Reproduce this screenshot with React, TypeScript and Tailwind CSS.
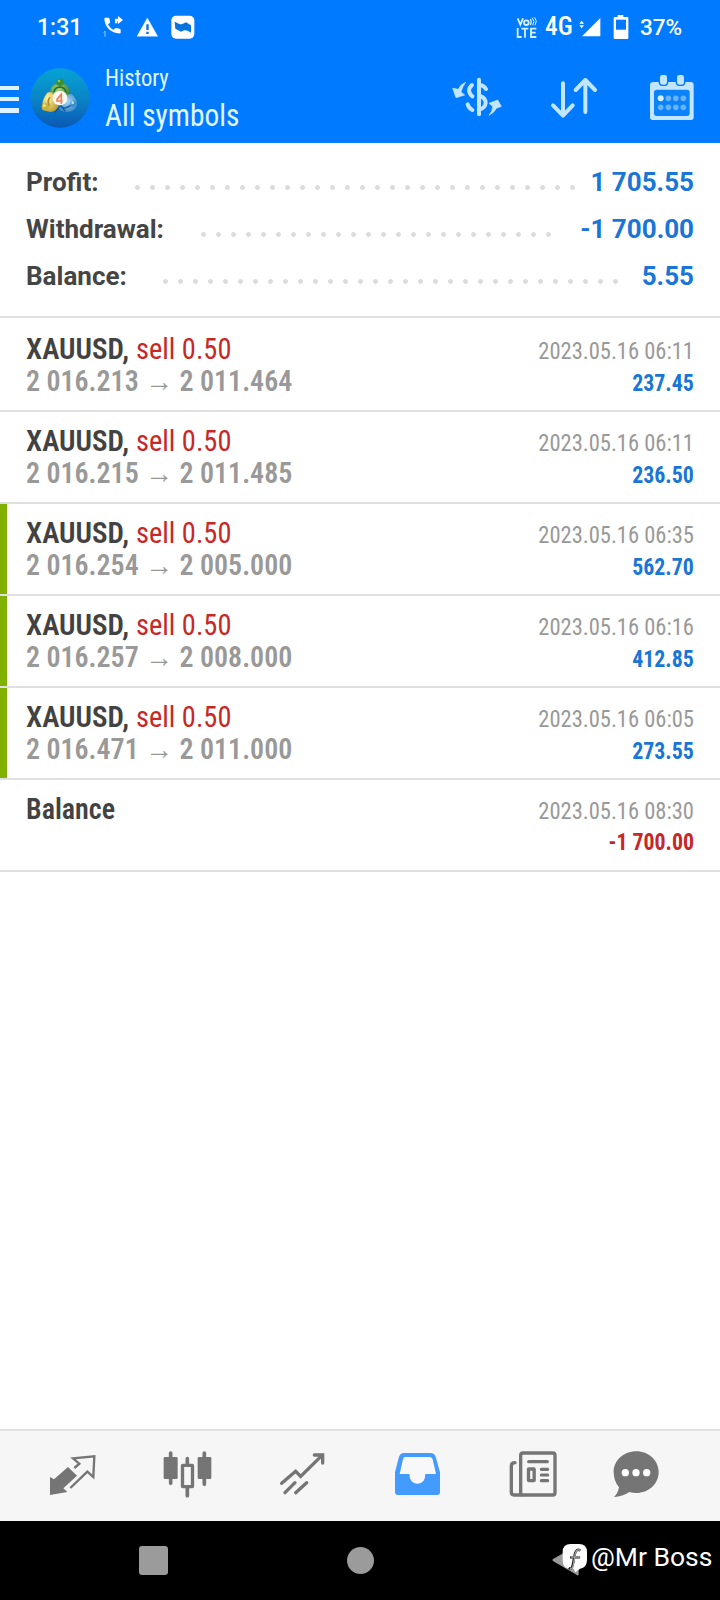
type Deal = { from: string; to: string; time: string; profit: string; marked?: boolean };

const summary = [
  { label: "Profit:", value: "1 705.55", dots: "left-[135px] w-[440px]" },
  { label: "Withdrawal:", value: "-1 700.00", dots: "left-[201px] w-[350px]" },
  { label: "Balance:", value: "5.55", dots: "left-[163px] w-[455px]" },
];

const deals: Deal[] = [
  { from: "2 016.213", to: "2 011.464", time: "2023.05.16 06:11", profit: "237.45" },
  { from: "2 016.215", to: "2 011.485", time: "2023.05.16 06:11", profit: "236.50" },
  { from: "2 016.254", to: "2 005.000", time: "2023.05.16 06:35", profit: "562.70", marked: true },
  { from: "2 016.257", to: "2 008.000", time: "2023.05.16 06:16", profit: "412.85", marked: true },
  { from: "2 016.471", to: "2 011.000", time: "2023.05.16 06:05", profit: "273.55", marked: true },
];

function StatusBar() {
  return (
    <div className="flex h-[54px] items-center pl-[37px] font-['Roboto'] text-white">
      <span className="w-[66px] text-[23px] leading-none font-medium">1:31</span>
      <svg className="h-6 w-6" viewBox="0 0 72 72" fill="#fff">
        <path d="M4 10 q0-2 3-2 h9 q3 0 3.500 3 l1.500 9 q0 3-2 4.500 l-4 4 q6 11 16 16 l5-4 q2-2 4-1.500 l10 2 q3 1 3 3.500 v8 q0 3-3 3 C24 55 4 35 4 10z" />
        <path d="M36 20 V11 H45 V3 L60 15 L45 27 V19 H43 V25 H36z" />
        <path d="M2 52 L6 49 V65" fill="none" stroke="#8fd0ff" strokeWidth="3" />
      </svg>
      <svg className="ml-[9px] h-6 w-[23px]" viewBox="0 0 69 72" fill="#fff">
        <path d="M34 9 L65 64 H3z" stroke="#fff" strokeWidth="1" />
        <path d="M31 28 h7 v17 h-7z M31 50 h7 v7 h-7z" fill="#0a6fd8" />
      </svg>
      <svg className="ml-3 h-6 w-6" viewBox="0 0 72 72">
        <rect x="1" y="2" width="69" height="69" rx="14" fill="#fff" />
        <path d="M11 20 L25 27 Q29 29 34 27 L45 22 L60 31 V53 L50 47 L40 46 L30 50 L13 41z" fill="#0a72dd" />
      </svg>
      <svg className="ml-[321px] h-6 w-[22px]" viewBox="0 0 66 72" fill="none" stroke="#d7f0ff" strokeWidth="5.500">
        <path d="M5 10 L13 29 L21 10" />
        <ellipse cx="31" cy="23" rx="7" ry="7" />
        <path d="M43 30 Q48 20 43 12" strokeWidth="4" />
        <path d="M50 31 Q58 20 49 8 M57 31 Q65 18 56 7" strokeWidth="3" />
        <path d="M5 39 V66 H17 M16 41 H37 M27 41 V68 M61 41 H45 V66 H61 M45 53 H59" />
      </svg>
      <span className="ml-[7px] w-[34px] font-['Roboto_Condensed'] text-[25.5px] leading-none font-medium">4G</span>
      <svg className="h-6 w-[22px]" viewBox="0 0 66 72" fill="#fff">
        <path d="M64 9 V64 H9z M1 26 L8 17 L15 26z M1 31 L8 40 L15 31z" />
      </svg>
      <svg className="ml-3 h-[26px] w-4" viewBox="0 0 48 78">
        <path d="M14 3 H31 V9 H43 Q46 9 46 12 V72 Q46 75 43 75 H5 Q2 75 2 72 V12 Q2 9 5 9 H14z" fill="#fff" />
        <path d="M9 17 H39 V47 H9z" fill="#0078ff" />
      </svg>
      <span className="ml-[11px] text-[22.5px] leading-none font-medium">37%</span>
    </div>
  );
}

function Logo() {
  return (
    <svg className="ml-[11px] h-[60px] w-[60px]" viewBox="0 0 180 180">
      <defs>
        <linearGradient id="sea" x1="0" y1="0" x2="0" y2="1">
          <stop offset="0" stopColor="#06a3d3" />
          <stop offset="0.5" stopColor="#0a85c6" />
          <stop offset="1" stopColor="#0b58b4" />
        </linearGradient>
        <radialGradient id="green" cx="0.4" cy="0.4" r="0.7">
          <stop offset="0" stopColor="#a9d97c" />
          <stop offset="1" stopColor="#2c7a2c" />
        </radialGradient>
        <radialGradient id="gold" cx="0.35" cy="0.3" r="0.9">
          <stop offset="0" stopColor="#fff0a0" />
          <stop offset="1" stopColor="#b08d1e" />
        </radialGradient>
        <radialGradient id="blue" cx="0.5" cy="0.4" r="0.8">
          <stop offset="0" stopColor="#a8dcf6" />
          <stop offset="1" stopColor="#1d6cb4" />
        </radialGradient>
      </defs>
      <circle cx="90" cy="90" r="89" fill="url(#sea)" />
      <path d="M61 78 Q58 48 90 44 Q122 48 120 78 L106 90 L74 88z" fill="url(#green)" />
      <path d="M72 72 Q74 58 90 57 Q106 58 108 74" fill="none" stroke="#276e35" strokeWidth="5" />
      <circle cx="90" cy="43" r="11" fill="#3c8f35" />
      <circle cx="87" cy="39" r="4" fill="#86c860" />
      <path d="M52 74 Q38 92 37 108 Q38 130 62 132 Q82 130 86 112 L74 80 Q62 68 52 74z" fill="url(#gold)" />
      <path d="M60 88 Q50 100 58 114" fill="none" stroke="#a98822" strokeWidth="5" />
      <circle cx="46" cy="117" r="11" fill="#c9b23a" />
      <circle cx="43" cy="113" r="4" fill="#f6e88a" />
      <path d="M128 80 Q142 96 141 110 Q136 130 112 132 Q90 132 82 114 L106 84 Q120 74 128 80z" fill="url(#blue)" />
      <path d="M94 118 Q108 124 122 112" fill="none" stroke="#1a62a6" strokeWidth="5" />
      <circle cx="131" cy="108" r="10" fill="#3b91d0" />
      <circle cx="128" cy="104" r="4" fill="#b9e4fb" />
      <path d="M74 134 L92 112 L106 130" fill="none" stroke="#0a5aa0" strokeWidth="4" />
      <circle cx="90" cy="90" r="22" fill="#fdf9f4" />
      <path d="M98 99 H81 V94 L94 79 V108" fill="none" stroke="#ee8055" strokeWidth="5" />
    </svg>
  );
}

function Header() {
  return (
    <header className="h-[143px] bg-[#007bff]">
      <StatusBar />
      <div className="flex h-[89px] items-start">
        <div className="mt-[32px] flex w-[19px] flex-col gap-[7px]">
          <div className="h-1 bg-[#dcf2ff]" />
          <div className="h-1 bg-[#dcf2ff]" />
          <div className="h-[5px] bg-[#dcf2ff]" />
        </div>
        <div className="mt-[14px]">
          <Logo />
        </div>
        <div className="ml-[15px] w-[345px] pt-2 font-['Roboto_Condensed'] text-[#e2f6ff]">
          <div className="origin-left scale-x-[.94] text-[24px] leading-[32px]">History</div>
          <div className="origin-left scale-x-[.918] text-[32px] leading-[42px]">All symbols</div>
        </div>
        <svg className="mt-[20px] h-[46px] w-[54px]" viewBox="60 222 162 138" fill="none" stroke="#c2e6ff">
          <path d="M147 239 V343" strokeWidth="12" strokeLinecap="round" />
          <path d="M150 256 Q160 255 168 267 M126 255 Q108 272 127 289 M150 288 Q167 294 167 309 Q165 324 150 328 M113 313 Q116 325 127 330" strokeWidth="12" strokeLinecap="round" />
          <path d="M107 247 Q91 253 85 268 L68 265 L78 293 L104 285 L93 276 Q96 262 107 247z M177 346 Q193 338 199 325 L214 319 L203 300 L177 310 L188 319 Q188 334 177 346z" fill="#c2e6ff" strokeWidth="2" />
        </svg>
        <svg className="mt-[20px] ml-[45px] h-[46px] w-[50px]" viewBox="357 222 150 138" fill="none" stroke="#c2e6ff" strokeWidth="12" strokeLinecap="round" strokeLinejoin="round">
          <path d="M399 250 V346 M369 316 L399 347 L428 316 M466 336 V240 M437 270 L466 240 L495 270" />
        </svg>
        <svg className="mt-[19px] ml-[49px] h-[50px] w-[48px]" viewBox="651 216 144 150">
          <path d="M667 243 H780 Q788 243 788 252 V349 Q788 357 780 357 H665 Q657 357 657 349 V252 Q657 243 667 243z" fill="#c2e6ff" />
          <rect x="669" y="266" width="107" height="79" rx="8" fill="#0b82f8" />
          <g fill="#c2e6ff" stroke="#007bff" strokeWidth="4">
            <rect x="685" y="220" width="25" height="33" rx="9" />
            <rect x="736" y="220" width="25" height="33" rx="9" />
          </g>
          <g fill="#66b2fb">
            <circle cx="689" cy="292" r="9" fill="#d2eeff" />
            <circle cx="712" cy="292" r="8.500" />
            <circle cx="734.500" cy="292" r="8.500" />
            <circle cx="757" cy="292" r="8.500" />
            <circle cx="689" cy="319" r="8.500" />
            <circle cx="712" cy="319" r="8.500" />
            <circle cx="734.500" cy="319" r="8.500" />
            <circle cx="757" cy="319" r="8.500" />
          </g>
        </svg>
      </div>
    </header>
  );
}

function Summary() {
  return (
    <section className="h-[175px] border-b-2 border-[#e0e0e0] pt-[16px] font-['Roboto'] text-[26px] leading-[47px] font-bold">
      {summary.map((s) => (
        <div key={s.label} className="relative flex h-[47px] justify-between pr-[26px] pl-[26px]">
          <span className="text-[#454545]">{s.label}</span>
          <div
            className={`absolute top-[26px] h-[5px] bg-[radial-gradient(circle_at_2.500px_2.500px,#dcdcdc_2px,transparent_2.800px)] bg-[length:15px_5px] ${s.dots}`}
          />
          <span className="text-[#1976d6]">{s.value}</span>
        </div>
      ))}
    </section>
  );
}

function DealRow({ deal, first }: { deal: Deal; first: boolean }) {
  return (
    <div className={`flex border-b-2 border-[#e0e0e0] ${first ? "h-[94px]" : "h-[92px]"}`}>
      <div className={`w-[7px] ${deal.marked ? "bg-[#80b000]" : ""}`} />
      <div className={`flex flex-1 flex-col pr-[26px] pl-[19px] ${first ? "pt-[15px]" : "pt-[13px]"}`}>
        <div className="flex h-8 items-baseline justify-between leading-[32px]">
          <span className="text-[29px] font-semibold text-[#424242]">
            XAUUSD, <span className="inline-block origin-left scale-x-[.98] font-normal text-[#c62828]">sell 0.50</span>
          </span>
          <span className="origin-right scale-x-[.938] text-[24px] text-[#999]">{deal.time}</span>
        </div>
        <div className="flex h-8 items-baseline justify-between leading-[32px]">
          <span className="origin-left scale-x-[.963] text-[29px] font-semibold text-[#999]">
            {deal.from} → {deal.to}
          </span>
          <span className="origin-right scale-x-[.95] text-[23px] font-bold text-[#1976d6]">{deal.profit}</span>
        </div>
      </div>
    </div>
  );
}

function History() {
  return (
    <section className="flex-1 font-['Roboto_Condensed']">
      {deals.map((d, i) => (
        <DealRow key={d.from} deal={d} first={i === 0} />
      ))}
      <div className="h-[92px] border-b-2 border-[#e0e0e0] px-[26px] pt-[13px] leading-[32px]">
        <div className="flex h-8 items-baseline justify-between">
          <span className="origin-left scale-x-[.967] text-[29px] font-semibold text-[#424242]">Balance</span>
          <span className="origin-right scale-x-[.938] text-[24px] text-[#999]">2023.05.16 08:30</span>
        </div>
        <div className="flex h-8 items-baseline justify-end pt-[2px]">
          <span className="origin-right scale-x-[.95] text-[23px] font-bold text-[#c62828]">-1 700.00</span>
        </div>
      </div>
    </section>
  );
}

function TabBar() {
  return (
    <nav className="flex h-[92px] border-t-2 border-[#e0e0e0] bg-[#f6f6f6] pt-[17px] pl-[46px] text-[#757575]">
      <svg className="h-[52px] w-[52px]" viewBox="138 84 156 156">
        <path d="M150 171 L162 178 L204 141 L231 167 L190 205 L202 216 L150 225z" fill="currentColor" />
        <path d="M223 144 L238 131 L219 115 L283 109 L280 171 L262 155 L211 204" fill="none" stroke="currentColor" strokeWidth="7" />
      </svg>
      <svg className="ml-[63px] h-[52px] w-[52px]" viewBox="483 84 156 156">
        <path d="M512 99 V190 M613 99 V193 M562 116 V134 M562 202 V227" stroke="currentColor" strokeWidth="11" strokeLinecap="round" />
        <rect x="491" y="111" width="42" height="66" rx="4" fill="currentColor" />
        <rect x="593" y="111" width="41" height="66" rx="4" fill="currentColor" />
        <rect x="547.500" y="136" width="30" height="64" rx="1" fill="none" stroke="currentColor" strokeWidth="10" />
      </svg>
      <svg className="ml-[63px] h-[52px] w-[52px]" viewBox="828 84 156 156" fill="none" stroke="currentColor" strokeWidth="10" strokeLinecap="round">
        <path d="M845 190 L887 154 L902 169 L966 106 M943 105 H968 V129 M855 218 L885 188 M887 218 L920 188" />
      </svg>
      <svg className="ml-[63px] h-[52px] w-[52px]" viewBox="93 84 156 156">
        <path d="M132 99 H212 Q223 99 227 110 L240 157 V216 Q240 225 231 225 H114 Q105 225 105 216 V157 L117 110 Q121 99 132 99z" fill="#449bff" />
        <path d="M136 111 H209 Q216 111 218 118 L228 162 H196 Q196 191 172 191 Q149 191 148 162 H119 L129 118 Q130 111 136 111z" fill="#f8f8f8" />
      </svg>
      <svg className="ml-[64px] h-[52px] w-[52px]" viewBox="441 84 156 156" fill="none" stroke="currentColor" strokeWidth="10">
        <rect x="482" y="99" width="103" height="126" rx="7" />
        <path d="M465 128 Q454 128 454 138 V217 Q454 225 462 225 H484" strokeLinecap="round" />
        <path d="M506 125 H562 M544 148 H563 M544 165 H563 M544 182 H563" strokeWidth="9.500" strokeLinecap="round" />
        <rect x="505.500" y="147" width="17" height="35" rx="1" />
      </svg>
      <svg className="ml-[50px] h-[52px] w-[52px]" viewBox="747 84 156 156">
        <path d="M829 94 C866 94 896 121 896 156 C896 192 866 219 829 219 Q818 219 808 216 Q788 229 762 231 Q774 220 777 202 Q761 183 761 156 C761 121 791 94 829 94z" fill="currentColor" />
        <circle cx="796" cy="158" r="11" fill="#fff" />
        <circle cx="828" cy="158" r="11" fill="#fff" />
        <circle cx="860" cy="158" r="11" fill="#fff" />
      </svg>
    </nav>
  );
}

function SystemNav() {
  return (
    <div className="flex h-[79px] items-start bg-black">
      <div className="mt-[25px] ml-[139px] h-[29px] w-[29px] rounded-[3px] bg-[#9b9b9b]" />
      <div className="mt-[26px] ml-[179px] h-[27px] w-[27px] rounded-full bg-[#9b9b9b]" />
      <svg className="mt-[21px] ml-[176px] h-9 w-[38px]" viewBox="570 366 114 108">
        <path d="M578 418 Q576 422 580 424 L652 466 Q656 467 656 462 V378 Q656 374 652 376z" fill="#9b9b9b" />
        <path d="M632 372 H657 Q681 372 681 396 V420 Q681 443 660 446 L646 457 L641 446 H632 Q608 446 608 422 V396 Q608 372 632 372z" fill="#fff" />
        <path d="M661 392 Q650 384 645 400 L638 436 Q635 450 626 444 M630 412 H660" fill="none" stroke="#222" strokeWidth="7" />
        <path d="M662 391 Q650 385 646 400 L640 436 Q637 448 630 446 M632 411 H661" fill="none" stroke="#a0a0a0" strokeWidth="4" />
      </svg>
      <span className="mt-[19px] ml-[3px] font-['Roboto'] text-[26.500px] leading-[34px] whitespace-nowrap text-white">@Mr Boss</span>
    </div>
  );
}

export default function App() {
  return (
    <div className="flex h-[1600px] w-[720px] flex-col overflow-hidden bg-white">
      <Header />
      <Summary />
      <History />
      <TabBar />
      <SystemNav />
    </div>
  );
}
